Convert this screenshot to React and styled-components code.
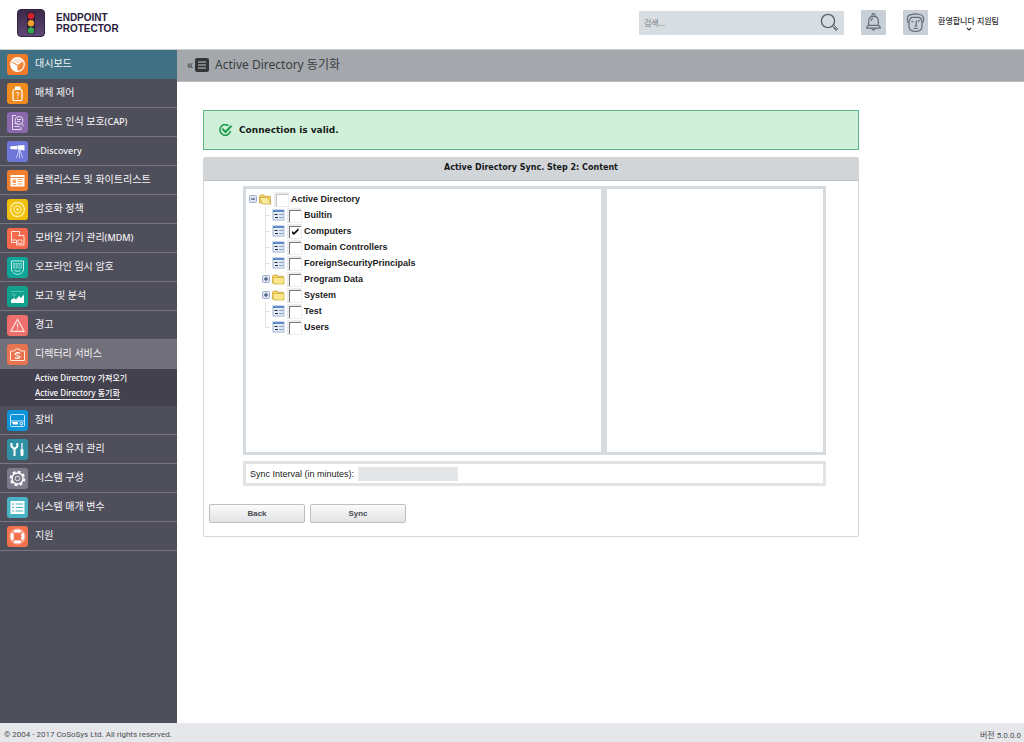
/**
 *
 * Endpoint Protector - Active Directory sync
 *
 */

import React, { useState } from 'react';
import styled, { createGlobalStyle, css } from 'styled-components';

const GlobalStyle = createGlobalStyle`
  *, *::before, *::after {
    box-sizing: border-box;
  }

  body {
    margin: 0;
    background: #fff;
    color: #333;
    font-family: 'Noto Sans', 'Noto Sans CJK KR', sans-serif;
    font-size: 10px;
  }

  button, input {
    font: inherit;
    color: inherit;
  }

  a {
    color: inherit;
    text-decoration: none;
  }

  svg {
    display: block;
    flex: none;
  }
`;

const Page = styled.div`
  display: flex;
  flex-direction: column;
  min-height: 100vh;
`;

/* header */

const Header = styled.header`
  display: flex;
  align-items: center;
  height: 50px;
  padding: 0 24px 4px 17px;
  border-bottom: 1px solid #c9ced2;
`;

const Logo = styled.a`
  display: flex;
  align-items: center;
  gap: 11px;
  margin-right: auto;
  color: #2c1b3d;
  font-family: 'Liberation Sans', sans-serif;
  font-size: 10px;
  font-weight: bold;
  line-height: 11px;

  span {
    display: block;
  }
`;

const SearchBox = styled.form`
  display: flex;
  align-items: center;
  width: 205px;
  height: 24px;
  padding: 0 5px;
  background: #d8dde1;
  border-radius: 1px;

  input {
    flex: 1;
    min-width: 0;
    padding: 0;
    border: 0;
    outline: 0;
    background: none;
    font-size: 8px;
  }

  input::placeholder {
    color: #777d82;
    opacity: 1;
  }
`;

const PlainButton = styled.button`
  padding: 0;
  border: 0;
  background: none;
  cursor: pointer;
`;

const TileButton = styled(PlainButton)`
  display: grid;
  place-items: center;
  width: 25px;
  height: 25px;
  margin-left: 17px;
  background: #c9cfd6;
  border-radius: 1px;
`;

const UserMenu = styled(PlainButton)`
  display: flex;
  flex-direction: column;
  align-items: center;
  min-width: 63px;
  margin-left: 9px;
  color: #2e2e33;
  font-size: 8px;
  font-weight: 500;
  line-height: 12px;
  white-space: nowrap;
`;

/* sidebar */

const Body = styled.div`
  display: flex;
  flex: 1;
`;

const Sidebar = styled.nav`
  flex: none;
  width: 177px;
  background: #4f4e5b;

  ul {
    margin: 0;
    padding: 0;
    list-style: none;
  }
`;

const NavLink = styled.a`
  display: flex;
  align-items: center;
  gap: 7px;
  height: 29px;
  padding-left: 7px;
  border-bottom: 1px solid #777682;
  color: #f4f4f6;
  font-size: 10px;
  line-height: 14px;
  white-space: nowrap;

  > span {
    padding-bottom: 2px;
  }

  ${props =>
    props.$tone === 'current' &&
    css`
      background: #407084;
      border-color: #407084;
    `}
  ${props =>
    props.$tone === 'open' &&
    css`
      background: #716f79;
      border-color: #716f79;
    `}
`;

const Latin = styled.span`
  font-size: 9px;
  font-weight: 500;
`;

const SubMenu = styled.ul`
  height: 37px;
  background: #42414d;

  && {
    padding: 1px 0 0 35px;
  }
`;

const SubLink = styled.a`
  display: inline-block;
  height: 13px;
  border-bottom: 1px solid ${props => (props.$active ? '#e8e8ec' : 'transparent')};
  color: #fff;
  font-size: 8px;
  font-weight: 500;
  line-height: 12px;
`;

const SubItem = styled.li`
  height: 15px;
  padding-top: 1px;
  line-height: 12px;
`;

/* content */

const Main = styled.main`
  flex: 1;
  min-width: 0;
`;

const TitleBar = styled.div`
  display: flex;
  align-items: center;
  gap: 2px;
  height: 32px;
  padding: 0 10px 2px;
  background: #a4a8ac;
  border-bottom: 1px solid #b9bcbf;
  color: #3b3d40;
  font-size: 12px;

  h1 {
    margin: 0 0 0 4px;
    font-size: 12px;
    font-weight: 400;
    line-height: 18px;
  }
`;

const Content = styled.div`
  display: flex;
  flex-direction: column;
  gap: 7px;
  max-width: 682px;
  padding: 28px 0 28px 26px;
`;

const Alert = styled.div`
  display: flex;
  align-items: center;
  gap: 6px;
  height: 40px;
  padding: 0 15px;
  background: #d1f0da;
  border: 1px solid #5cb585;
  color: #161c18;
  font-family: 'DejaVu Sans', sans-serif;
  font-size: 9px;
  font-weight: bold;
`;

const Panel = styled.section`
  border: 1px solid #d3d5d8;
  border-radius: 2px;
`;

const PanelTitle = styled.h2`
  margin: 0;
  height: 23px;
  background: #d2d5d8;
  border-bottom: 1px solid #bfc3c6;
  color: #16181a;
  font-family: 'DejaVu Sans', sans-serif;
  font-size: 8px;
  font-weight: bold;
  line-height: 20px;
  text-align: center;
`;

const PanelBody = styled.div`
  display: flex;
  flex-direction: column;
  gap: 6px;
  padding: 5px 32px 0 39px;
`;

const Columns = styled.div`
  display: grid;
  grid-template-columns: 361fr 222fr;
`;

const Frame = styled.div`
  min-width: 0;
  border: 3px solid #d5dbdf;
`;

const TreeFrame = styled(Frame)`
  min-height: 269px;
  padding: 2px 3px;
`;

const IntervalFrame = styled(Frame)`
  display: flex;
  align-items: center;
  gap: 4px;
  height: 25px;
  padding: 0 4px;
  border-color: #e0e4e7;
  color: #222;
  font-family: 'Liberation Sans', sans-serif;
  font-size: 9px;

  input {
    width: 100px;
    height: 14px;
    padding: 0 3px;
    border: 0;
    background: #e5e6e8;
  }
`;

const Actions = styled.div`
  display: flex;
  gap: 5px;
  padding: 18px 5px 13px;
`;

const ActionButton = styled.button`
  width: 96px;
  height: 19px;
  padding: 0;
  border: 1px solid #bcbec1;
  border-radius: 2px;
  background: linear-gradient(#fbfbfb, #e1e2e4);
  color: #4a4e54;
  font-family: 'Liberation Sans', sans-serif;
  font-size: 8px;
  font-weight: bold;
`;

/* tree */

const Tree = styled.ul`
  margin: 0;
  padding: 0;
  list-style: none;
  color: #1c1c1e;
  font-family: 'Liberation Sans', sans-serif;
  font-size: 9px;
  font-weight: bold;
`;

const Branch = styled(Tree)`
  padding-left: 13px;
`;

const TreeRow = styled.div`
  display: flex;
  align-items: center;
  gap: 2px;
  height: 16px;

  label {
    display: flex;
    align-items: center;
    gap: 2px;
    line-height: 14px;
    white-space: nowrap;
  }
`;

const TreeCheck = styled.input`
  appearance: none;
  display: grid;
  place-items: center;
  width: 15px;
  height: 15px;
  margin: 0;
  border: 1px solid #ececee;
  border-width: 2px 1px 1px 2px;
  background: #fff;
  box-shadow: inset 1px 1px 0 ${props => (props.$soft ? '#c3c3c6' : '#77777b')};

  &:checked::before {
    content: '';
    width: 7px;
    height: 7px;
    background: #111;
    clip-path: polygon(0 35%, 35% 65%, 100% 0, 100% 35%, 35% 100%, 0 70%);
  }
`;

const Footer = styled.footer`
  display: flex;
  align-items: center;
  justify-content: space-between;
  height: 19px;
  padding: 3px 3px 0 4px;
  background: #e6e7eb;
  color: #4c4e53;
  font-family: Roboto, 'Noto Sans CJK KR', sans-serif;
  font-size: 8px;
`;

/* icons */

function LogoMark() {
  return (
    <svg width="28" height="28" viewBox="0 0 28 28" aria-hidden="true">
      <defs>
        <linearGradient id="logoFill" x1="0" y1="0" x2="0" y2="1">
          <stop offset="0" stopColor="#3b2848" />
          <stop offset="1" stopColor="#5f4876" />
        </linearGradient>
      </defs>
      <rect x="0.5" y="0.5" width="27" height="27" rx="3.5" fill="url(#logoFill)" stroke="#33213f" />
      <rect x="10" y="3" width="8" height="22" rx="3" fill="#2b1a35" />
      <circle cx="14" cy="7" r="3.2" fill="#d2232c" />
      <circle cx="14" cy="14.2" r="3.2" fill="#f0a030" />
      <circle cx="14" cy="21.4" r="3.2" fill="#35a853" />
    </svg>
  );
}

function SearchIcon() {
  return (
    <svg width="19" height="19" viewBox="0 0 19 19" fill="none" stroke="#5d656c" aria-hidden="true">
      <circle cx="8" cy="8" r="6.6" strokeWidth="1.4" />
      <path d="M12.6 12.8l1-1 4.2 4-1.6 1.7-4-4.2z" strokeWidth="1" />
      <path d="M14 14.6l2.4 2.4" strokeWidth="1.4" />
    </svg>
  );
}

function BellIcon() {
  return (
    <svg width="17" height="19" viewBox="0 0 17 19" fill="none" stroke="#656c75" strokeWidth="1.2" aria-hidden="true">
      <path d="M7 3.5V2.2a1.5 1.5 0 013 0v1.3" />
      <path d="M3.7 12.3V8c0-3 2-4.700 4.800-4.700S13.300 5 13.300 8v4.300" />
      <path d="M3.700 12.300h9.600l1.900 1.800v1H1.800v-1z" />
      <path d="M6.800 15.300c.2 2.400 3.200 2.400 3.400 0M6 8c0-1.600.9-2.500 2-2.700" />
    </svg>
  );
}

function FaceIcon() {
  return (
    <svg width="19" height="20" viewBox="0 0 19 20" fill="none" stroke="#656c75" strokeWidth="1.2" aria-hidden="true">
      <path d="M3 8v5c0 4 2.500 5.500 6.500 5.500S16 17 16 13V8" />
      <path d="M3 9.500C1.300 9.300 1.300 7 1.500 5c.3-2.500 2-3.300 4-3.300C7.500.8 11 .8 13 1.500c3 0 4.300 1.500 4.500 4 .1 2 0 3.800-1.500 4" />
      <path d="M3.500 8c0-2.500.8-3.500 2.500-3.700h7c1.700.2 2.500 1.200 2.500 3.700" />
      <path d="M5.500 8.700h1.800M11.500 7.800h2.300M10.300 7.800v5.400H8.500M7.500 15.500h4.500" />
    </svg>
  );
}

function ChevronIcon() {
  return (
    <svg width="6" height="4" viewBox="0 0 6 4" fill="none" stroke="#333" strokeWidth="1.2" aria-hidden="true">
      <path d="M0.800 0.800L3 3l2.200-2.200" />
    </svg>
  );
}

function MenuIcon() {
  return (
    <svg width="14" height="14" viewBox="0 0 14 14" aria-hidden="true">
      <rect width="14" height="14" rx="2" fill="#34363a" />
      <path d="M3 4h8M3 7h8M3 10h8" stroke="#c6c9cc" strokeWidth="1.2" />
    </svg>
  );
}

function ValidIcon() {
  return (
    <svg width="14" height="13" viewBox="0 0 14 13" fill="none" stroke="#1f9d4d" aria-hidden="true">
      <path d="M9.500 1.700A5.300 5.300 0 1011.500 6.800" strokeWidth="1.600" />
      <path d="M3.300 4.800l3.200 3.200 6-6.200" strokeWidth="2" />
    </svg>
  );
}

function FolderIcon({ open }) {
  return (
    <svg width="13" height="12" viewBox="0 0 13 12" aria-hidden="true">
      <path d="M0.500 10V3.200L1.500 2h3.500l1 1.300h5.500v6.700z" fill="#f3d668" stroke="#c9a63c" strokeWidth="0.800" />
      {open ? (
        <path d="M0.500 4.500h8l3.500 6.500H3.500z" fill="#fbec9d" stroke="#c9a63c" strokeWidth="0.800" />
      ) : (
        <path d="M0.600 4.500h11.400v6.500H1.500z" fill="#fbe88c" stroke="#d3b04a" strokeWidth="0.800" />
      )}
    </svg>
  );
}

function UnitIcon() {
  return (
    <svg width="13" height="12" viewBox="0 0 13 12" aria-hidden="true">
      <rect x="1" y="1" width="11" height="10" fill="#e6eef8" stroke="#9fb5d2" />
      <path d="M1 2h11" stroke="#5f8bc8" strokeWidth="2" />
      <path d="M2.500 5.500h3M3 8.500h3" stroke="#222d44" strokeWidth="1.200" />
      <path d="M7 5.500h4M7 8.500h4" stroke="#7d9dc9" strokeWidth="1.200" />
    </svg>
  );
}

function ToggleIcon({ expanded }) {
  return (
    <svg width="8" height="8" viewBox="0 0 8 8" aria-hidden="true">
      <rect x="0.500" y="0.500" width="7" height="7" rx="1" fill="#dde6f2" stroke="#9dadc6" />
      <path d={expanded ? 'M2 4h4' : 'M2 4h4M4 2v4'} stroke="#22385f" />
    </svg>
  );
}

function TreeLine({ last }) {
  return (
    <svg width="8" height="16" viewBox="0 0 8 16" stroke="#e0e1e4" aria-hidden="true">
      <path d={last ? 'M3.500 0v8.500h4.500' : 'M3.500 0v16M3.500 8.500h4.500'} fill="none" />
    </svg>
  );
}

const glyphs = {
  dashboard: (
    <>
      <circle cx="10.500" cy="10.500" r="6.800" fill="#fff" />
      <path d="M11 11.500V17.300a6.800 6.800 0 005.500-10z" fill="#f4873c" />
      <path d="M11 17.500V11.500L4 7.500M11 11.500l6-4.500" stroke="#f07c2c" />
      <path d="M11 10L6 7c2.500-3.500 6.500-3.500 9-.6z" fill="#fde3cf" />
      <circle cx="10.500" cy="10.500" r="6.800" stroke="#fff" strokeWidth="1.200" />
    </>
  ),
  device: (
    <>
      <path d="M8 3.500h5.500v3H8z" fill="#fff" />
      <path d="M6 8.200c0-1 .5-1.700 1.500-1.700h6c1 0 1.500.7 1.500 1.700v8.300c0 .6-.4 1-1 1H7c-.6 0-1-.4-1-1z" stroke="#fff" strokeWidth="1.200" />
      <path d="M9 10.500c.2-1.800 3.200-1.500 3 .2-.2 1-1.500 1.200-1.500 2.600M10.500 14.500v1" stroke="#fff" />
    </>
  ),
  content: (
    <>
      <path d="M9 3.500H5.500v14h8.500V15M7.500 11.500h3M7.500 14.500h5" stroke="#e9def3" />
      <circle cx="12" cy="8.500" r="4" stroke="#e9def3" />
      <path d="M10 7.500h4M10 9.500h3M14.500 11.500l2.500 3" stroke="#e9def3" />
    </>
  ),
  discovery: (
    <>
      <path d="M3 5.500l7-.8v3.800l-6.500-.5zM10.500 4.500l7-.5v5.500l-7-1z" fill="#fff" />
      <path d="M12 9l-2.500 8M12.500 9v8.500M13 9l2.500 8" stroke="#cfd4ff" strokeWidth="0.800" />
    </>
  ),
  lists: (
    <>
      <rect x="3.500" y="5" width="14" height="11.500" fill="#fff" />
      <path d="M3.500 7.500h14" stroke="#f08a3c" />
      <rect x="5.500" y="9.500" width="3.500" height="3.500" fill="#f6a468" />
      <path d="M10.500 9.500h5M10.500 11.500h5M5.500 14.500h3.500M10.500 14h5" stroke="#f6a468" />
    </>
  ),
  encryption: (
    <>
      <circle cx="10.500" cy="10.500" r="7" stroke="#fdf1a8" strokeWidth="1.400" />
      <circle cx="10.500" cy="10.500" r="3.600" stroke="#fdf1a8" strokeWidth="1.200" />
      <circle cx="10.500" cy="10.500" r="1.300" fill="#fdf1a8" />
    </>
  ),
  mobile: (
    <>
      <path d="M9.500 14.500H4.500v-11h8V7M4.500 12h5" stroke="#ffe4de" />
      <path d="M11 7.500h6v9.500H9.500V12" stroke="#ffe4de" />
      <path d="M11 12h4v3.500h-4z" stroke="#ffe4de" strokeWidth="0.800" />
    </>
  ),
  offline: (
    <>
      <path d="M4.500 4h12v8c0 3-3 5-6 5.500-3-.5-6-2.500-6-5.500z" stroke="#c8f2ec" />
      <path d="M6 6h9v5.500H6z" fill="#8fdcd2" />
      <path d="M6 8h9M6 10h9M8.500 6v5.500M11 6v5.500M13 6v5.500" stroke="#12a397" strokeWidth="0.600" />
      <path d="M7.500 13.500c2 1 4 1 6 0" stroke="#c8f2ec" />
    </>
  ),
  reports: (
    <>
      <path d="M4 5.500h13" stroke="#5fc9b8" strokeWidth="0.800" />
      <circle cx="7" cy="9" r="1.200" stroke="#5fc9b8" strokeWidth="0.800" />
      <path d="M4 17v-3l3-2 2 1.500 3-3.500 2 2 3-3.500V17z" fill="#fff" />
    </>
  ),
  alert: (
    <>
      <path d="M10.500 4.300l6.700 12H3.800z" stroke="#ffe0de" strokeWidth="1.200" strokeLinejoin="round" />
      <path d="M10.500 8.500v4M10.500 13.500v1.300" stroke="#ffe0de" strokeWidth="1.200" />
    </>
  ),
  directory: (
    <>
      <path d="M3.500 7h4l1-2h4l1 2h4v9.500h-14z" stroke="#ffe4d8" strokeLinejoin="round" />
      <path d="M8 11a3 3 0 015-1.500M13 12a3 3 0 01-5 1.500" stroke="#fff" strokeWidth="1.400" />
      <circle cx="10.500" cy="11.500" r="1" fill="#fff" />
    </>
  ),
  appliance: (
    <>
      <rect x="3.500" y="4.500" width="14" height="12" rx="1" stroke="#bfe6fb" />
      <path d="M4 11h13" stroke="#bfe6fb" />
      <path d="M5 12h6v2.500H6z" fill="#fff" />
      <circle cx="14.500" cy="13.700" r="1.300" stroke="#fff" />
    </>
  ),
  maintenance: (
    <>
      <path d="M4.500 4v3.500l3 2.500v7M10.300 4v3.500L7.500 10" stroke="#fff" strokeWidth="2" />
      <path d="M15 4v6" stroke="#fff" strokeWidth="1.200" />
      <rect x="13.500" y="10" width="3" height="7" rx="1.200" fill="#fff" />
    </>
  ),
  config: (
    <>
      <circle cx="10.500" cy="10.500" r="6.800" stroke="#fff" strokeWidth="2" strokeDasharray="3 2.340" />
      <circle cx="10.500" cy="10.500" r="5.500" stroke="#fff" strokeWidth="1.400" />
      <circle cx="10.500" cy="10.500" r="2.300" stroke="#dddce4" />
    </>
  ),
  params: (
    <>
      <rect x="3.500" y="4" width="14" height="13" rx="0.500" fill="#fff" />
      <path d="M5 7h2M5 10.500h2M5 14h2M8.500 7H16M8.500 10.500H16M8.500 14H16" stroke="#48b3c4" strokeWidth="1.200" />
    </>
  ),
  support: (
    <>
      <circle cx="10.500" cy="10.500" r="5.400" stroke="#fff" strokeWidth="3" />
      <path d="M4.500 4.500l3.500 3.500M16.500 4.500L13 8M4.500 16.500L8 13M16.500 16.500L13 13" stroke="#f2714f" strokeWidth="1.500" />
      <circle cx="10.500" cy="10.500" r="7.500" stroke="#ffd8cc" strokeWidth="0.800" />
    </>
  ),
};

function NavIcon({ name, color }) {
  return (
    <svg width="21" height="21" viewBox="0 0 21 21" fill="none" aria-hidden="true">
      <rect width="21" height="21" rx="3" fill={color} />
      {glyphs[name]}
    </svg>
  );
}

const navItems = [
  { icon: 'dashboard', color: '#ef7a2a', text: '대시보드', tone: 'current' },
  { icon: 'device', color: '#f08c1e', text: '매체 제어' },
  { icon: 'content', color: '#8a68ad', text: '콘텐츠 인식 보호', latin: '(CAP)' },
  { icon: 'discovery', color: '#6f78d8', latin: 'eDiscovery' },
  { icon: 'lists', color: '#ef7e2e', text: '블랙리스트 및 화이트리스트' },
  { icon: 'encryption', color: '#f2c00c', text: '암호화 정책' },
  { icon: 'mobile', color: '#f4694c', text: '모바일 기기 관리', latin: '(MDM)' },
  { icon: 'offline', color: '#0fa699', text: '오프라인 임시 암호' },
  { icon: 'reports', color: '#10a08c', text: '보고 및 분석' },
  { icon: 'alert', color: '#ee6f6c', text: '경고' },
  {
    icon: 'directory',
    color: '#e8734f',
    text: '디렉터리 서비스',
    tone: 'open',
    children: [
      { text: 'Active Directory 가져오기' },
      { text: 'Active Directory 동기화', active: true },
    ],
  },
  { icon: 'appliance', color: '#0c93d8', text: '장비' },
  { icon: 'maintenance', color: '#2f91a3', text: '시스템 유지 관리' },
  { icon: 'config', color: '#7d7b8c', text: '시스템 구성' },
  { icon: 'params', color: '#48b3c4', text: '시스템 매개 변수' },
  { icon: 'support', color: '#f2714f', text: '지원' },
];

const units = [
  { name: 'Builtin' },
  { name: 'Computers' },
  { name: 'Domain Controllers' },
  { name: 'ForeignSecurityPrincipals' },
  { name: 'Program Data', folder: true },
  { name: 'System', folder: true },
  { name: 'Test' },
  { name: 'Users' },
];

function DirectoryTree() {
  const [checked, setChecked] = useState({ Computers: true });
  const toggle = name => setChecked(prev => ({ ...prev, [name]: !prev[name] }));

  return (
    <Tree>
      <li>
        <TreeRow>
          <ToggleIcon expanded />
          <FolderIcon open />
          <label>
            <TreeCheck
              type="checkbox"
              $soft
              checked={!!checked.root}
              onChange={() => toggle('root')}
            />
            Active Directory
          </label>
        </TreeRow>
        <Branch>
          {units.map((unit, index) => (
            <li key={unit.name}>
              <TreeRow>
                {unit.folder ? <ToggleIcon /> : <TreeLine last={index === units.length - 1} />}
                {unit.folder ? <FolderIcon /> : <UnitIcon />}
                <label>
                  <TreeCheck
                    type="checkbox"
                    checked={!!checked[unit.name]}
                    onChange={() => toggle(unit.name)}
                  />
                  {unit.name}
                </label>
              </TreeRow>
            </li>
          ))}
        </Branch>
      </li>
    </Tree>
  );
}

function App() {
  return (
    <Page>
      <GlobalStyle />
      <Header>
        <Logo href="#">
          <LogoMark />
          <div>
            <span>ENDPOINT</span>
            <span>PROTECTOR</span>
          </div>
        </Logo>
        <SearchBox role="search" onSubmit={e => e.preventDefault()}>
          <input type="text" aria-label="검색" placeholder="검색..." />
          <PlainButton type="submit" aria-label="검색">
            <SearchIcon />
          </PlainButton>
        </SearchBox>
        <TileButton type="button" aria-label="알림">
          <BellIcon />
        </TileButton>
        <TileButton type="button" aria-label="프로필">
          <FaceIcon />
        </TileButton>
        <UserMenu type="button">
          환영합니다 지원팀
          <ChevronIcon />
        </UserMenu>
      </Header>
      <Body>
        <Sidebar>
          <ul>
            {navItems.map(item => (
              <li key={item.icon}>
                <NavLink href="#" $tone={item.tone}>
                  <NavIcon name={item.icon} color={item.color} />
                  <span>
                    {item.text}
                    {item.latin && <Latin>{item.latin}</Latin>}
                  </span>
                </NavLink>
                {item.children && (
                  <SubMenu>
                    {item.children.map(child => (
                      <SubItem key={child.text}>
                        <SubLink href="#" $active={child.active}>
                          {child.text}
                        </SubLink>
                      </SubItem>
                    ))}
                  </SubMenu>
                )}
              </li>
            ))}
          </ul>
        </Sidebar>
        <Main>
          <TitleBar>
            <PlainButton type="button" aria-label="메뉴 접기">
              «
            </PlainButton>
            <MenuIcon />
            <h1>Active Directory 동기화</h1>
          </TitleBar>
          <Content>
            <Alert role="status">
              <ValidIcon />
              Connection is valid.
            </Alert>
            <Panel>
              <PanelTitle>Active Directory Sync. Step 2: Content</PanelTitle>
              <PanelBody>
                <Columns>
                  <TreeFrame>
                    <DirectoryTree />
                  </TreeFrame>
                  <Frame />
                </Columns>
                <IntervalFrame>
                  <label htmlFor="interval">Sync Interval (in minutes):</label>
                  <input id="interval" type="text" />
                </IntervalFrame>
              </PanelBody>
              <Actions>
                <ActionButton type="button">Back</ActionButton>
                <ActionButton type="button">Sync</ActionButton>
              </Actions>
            </Panel>
          </Content>
        </Main>
      </Body>
      <Footer>
        <span>© 2004 - 2017 CoSoSys Ltd. All rights reserved.</span>
        <span>버전 5.0.0.0</span>
      </Footer>
    </Page>
  );
}

export default App;
